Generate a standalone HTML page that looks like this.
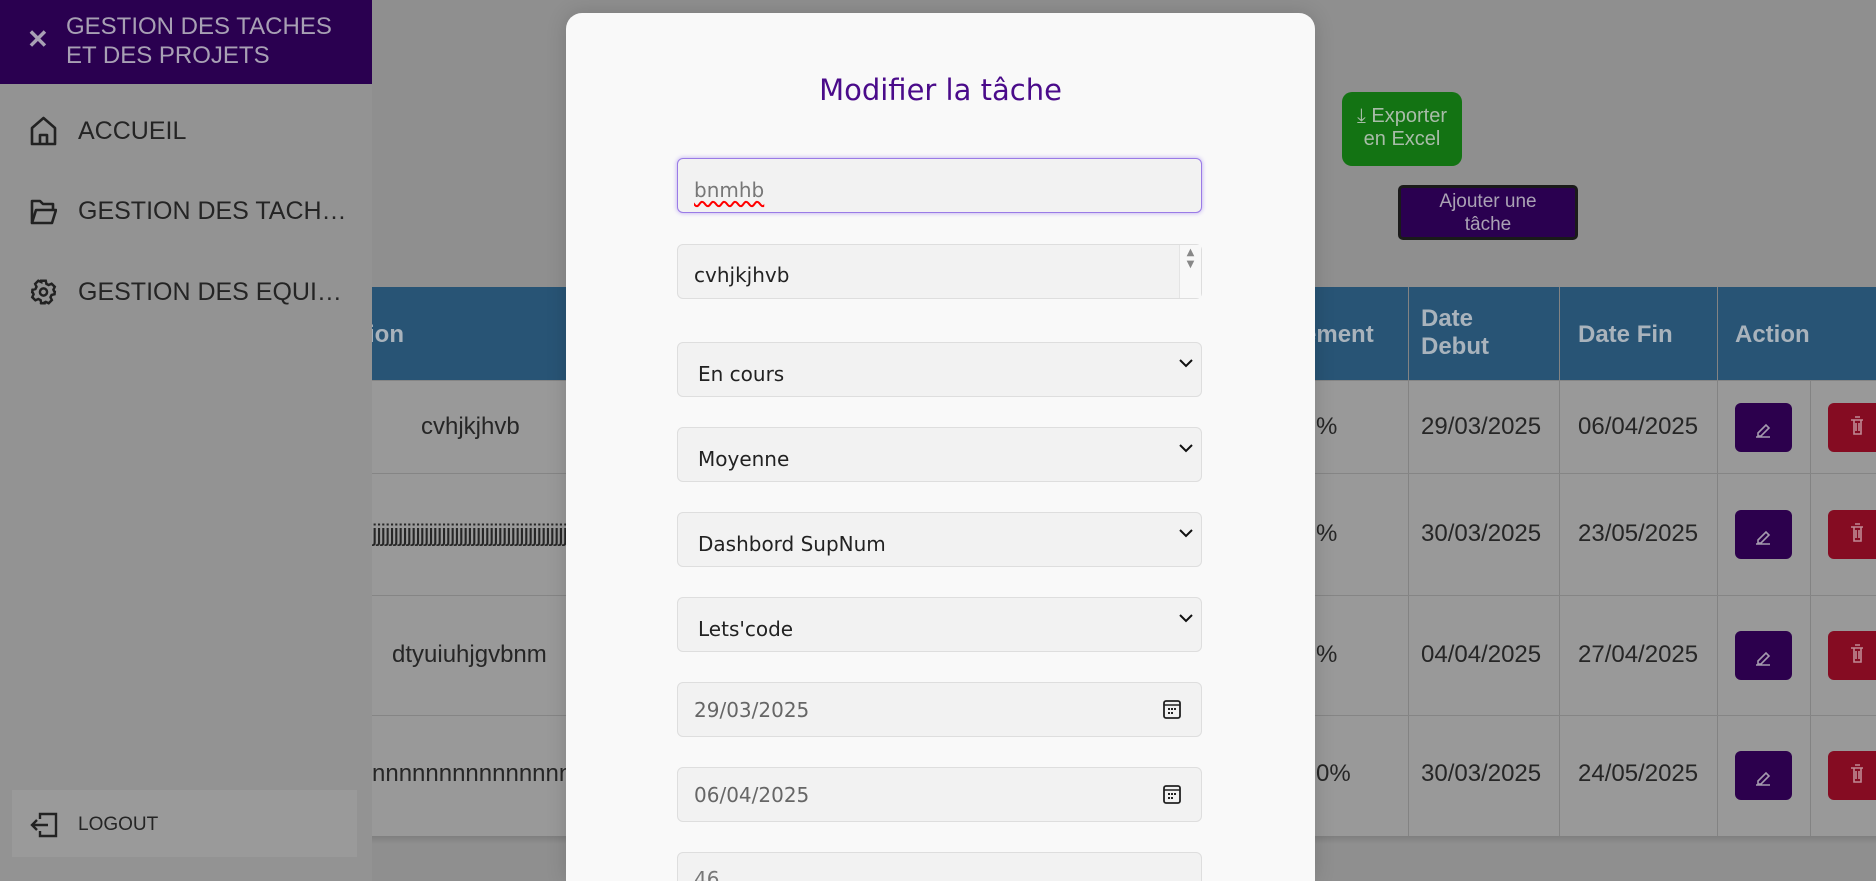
<!DOCTYPE html>
<html><head><meta charset="utf-8"><style>
*{box-sizing:border-box;margin:0;padding:0}
html{overflow:hidden;width:1876px;height:881px}
body{width:1876px;height:881px;overflow:hidden;background:#8f8f8f;font-family:"Liberation Sans",Arial,sans-serif;position:relative}
.abs{position:absolute}
.sb{left:0;top:0;width:372px;height:881px;background:#939393}
.sbh{left:0;top:0;width:372px;height:84px;background:#2a0050;color:#a8a0b4;font-size:24px;line-height:29px;padding:12px 0 0 66px}
.item{left:30px;color:#242424;font-size:25px;display:flex;align-items:center;gap:21px}
.th{background:#285475;color:#a9b3bc;font-weight:bold;font-size:24px}
.cell{color:#262626;font-size:24px}
.vl{width:1px;background:#838383}
.hl{height:1px;background:#858585}
.modal{left:566px;top:13px;width:749px;height:868px;background:#f9f9f9;border-radius:16px 16px 0 0;box-shadow:0 0 20px rgba(0,0,0,.15)}
.f{left:677px;width:525px;height:55px;background:#f2f2f2;border:1px solid #dedede;border-radius:6px;font-family:"DejaVu Sans","Liberation Sans",sans-serif;font-size:20px;color:#222;padding-left:20px;padding-top:8px;display:flex;align-items:center}
.chev{position:absolute;right:8px;top:16px}
.btn{border-radius:6px}
</style></head><body>
<!-- table -->
<div class="abs th" style="left:372px;top:287px;width:1504px;height:93px"></div>
<div class="abs" style="left:372px;top:380px;width:1504px;height:456px;background:#999"></div>
<div class="abs" style="left:372px;top:836px;width:1504px;height:8px;background:linear-gradient(#7f7f7f,#8f8f8f)"></div>
<div class="abs th" style="left:360px;top:321px">tion</div>
<div class="abs th" style="left:1303px;top:321px">ement</div>
<div class="abs th" style="left:1421px;top:305px;line-height:28px">Date<br>Debut</div>
<div class="abs th" style="left:1578px;top:321px">Date Fin</div>
<div class="abs th" style="left:1735px;top:321px">Action</div>
<div class="abs vl" style="left:1408px;top:287px;height:549px"></div>
<div class="abs vl" style="left:1559px;top:287px;height:549px"></div>
<div class="abs vl" style="left:1717px;top:287px;height:549px"></div>
<div class="abs vl" style="left:1810px;top:380px;height:456px"></div>
<div class="abs hl" style="left:372px;top:380px;width:1504px"></div>
<div class="abs hl" style="left:372px;top:473px;width:1504px"></div>
<div class="abs hl" style="left:372px;top:595px;width:1504px"></div>
<div class="abs hl" style="left:372px;top:715px;width:1504px"></div>
<div class="abs cell" style="left:421px;top:413px">cvhjkjhvb</div>
<div class="abs cell" style="left:372px;top:520px;width:195px;overflow:hidden;white-space:nowrap;letter-spacing:-1px">jjjjjjjjjjjjjjjjjjjjjjjjjjjjjjjjjjjjjjjjjjjjjjjjjjjjjjjjjjjjjjjjjjjjjjjjj</div>
<div class="abs cell" style="left:392px;top:641px">dtyuiuhjgvbnm</div>
<div class="abs cell" style="left:372px;top:760px;width:195px;overflow:hidden;white-space:nowrap">nnnnnnnnnnnnnnnnnnnnnn</div>
<div class="abs cell" style="left:1316px;top:413px">%</div>
<div class="abs cell" style="left:1316px;top:520px">%</div>
<div class="abs cell" style="left:1316px;top:641px">%</div>
<div class="abs cell" style="left:1316px;top:760px">0%</div>
<div class="abs cell" style="left:1421px;top:413px">29/03/2025</div>
<div class="abs cell" style="left:1578px;top:413px">06/04/2025</div>
<div class="abs cell" style="left:1421px;top:520px">30/03/2025</div>
<div class="abs cell" style="left:1578px;top:520px">23/05/2025</div>
<div class="abs cell" style="left:1421px;top:641px">04/04/2025</div>
<div class="abs cell" style="left:1578px;top:641px">27/04/2025</div>
<div class="abs cell" style="left:1421px;top:760px">30/03/2025</div>
<div class="abs cell" style="left:1578px;top:760px">24/05/2025</div>
<!-- action buttons -->
<div class="abs btn" style="left:1735px;top:403px;width:57px;height:49px;background:#2c004d"></div>
<div class="abs btn" style="left:1828px;top:403px;width:60px;height:49px;background:#850c22"></div>
<div class="abs btn" style="left:1735px;top:510px;width:57px;height:49px;background:#2c004d"></div>
<div class="abs btn" style="left:1828px;top:510px;width:60px;height:49px;background:#850c22"></div>
<div class="abs btn" style="left:1735px;top:631px;width:57px;height:49px;background:#2c004d"></div>
<div class="abs btn" style="left:1828px;top:631px;width:60px;height:49px;background:#850c22"></div>
<div class="abs btn" style="left:1735px;top:751px;width:57px;height:49px;background:#2c004d"></div>
<div class="abs btn" style="left:1828px;top:751px;width:60px;height:49px;background:#850c22"></div>
<svg class="abs" style="left:0;top:0" width="1876" height="881">
<g stroke="#a49aae" stroke-width="1.6" fill="none">
<path d="M1756 437h14M1758 433l8-8 3 3-8 8h-3z"/><path d="M1756 544h14M1758 540l8-8 3 3-8 8h-3z"/><path d="M1756 665h14M1758 661l8-8 3 3-8 8h-3z"/><path d="M1756 785h14M1758 781l8-8 3 3-8 8h-3z"/>
</g>
<g stroke="#c08a94" stroke-width="1.6" fill="none">
<path d="M1851 420h12M1854 420v14h7v-14M1855 417h5M1856 423v8M1859 423v8"/>
<path d="M1851 527h12M1854 527v14h7v-14M1855 524h5M1856 530v8M1859 530v8"/>
<path d="M1851 648h12M1854 648v14h7v-14M1855 645h5M1856 651v8M1859 651v8"/>
<path d="M1851 768h12M1854 768v14h7v-14M1855 765h5M1856 771v8M1859 771v8"/>
</g></svg>
<!-- top buttons -->
<div class="abs" style="left:1342px;top:92px;width:120px;height:74px;background:#137313;border-radius:10px;color:#a8bca8;font-size:20px;text-align:center;line-height:23px;padding-top:13px">⤓ Exporter<br>en Excel</div>
<div class="abs" style="left:1398px;top:185px;width:180px;height:55px;background:#2a0050;border:3px solid #1a1a1a;border-radius:5px;color:#aaa2b4;font-size:19px;text-align:center;line-height:23px;padding-top:2px">Ajouter une<br>tâche</div>
<!-- sidebar -->
<div class="abs sb"></div>
<div class="abs sbh">GESTION DES TACHES<br>ET DES PROJETS</div>
<div class="abs" style="left:27px;top:24px;color:#a8a0b4;font-size:26px;font-weight:bold">✕</div>
<div class="abs item" style="top:116px"><svg width="27" height="30" viewBox="0 0 27 30" fill="none" stroke="#222" stroke-width="2.6" stroke-linejoin="round"><path d="M2 12L13.5 2 25 12v16H2z"/><path d="M10 28v-9h7v9"/></svg>ACCUEIL</div>
<div class="abs item" style="top:197px"><svg width="27" height="26" viewBox="0 0 27 26" fill="none" stroke="#222" stroke-width="2.6" stroke-linejoin="round"><path d="M2 24V2h8l3 3h10v5"/><path d="M2 24l4-13h20l-4 13z"/></svg>GESTION DES TACH…</div>
<div class="abs item" style="top:277px"><svg width="27" height="30" viewBox="0 0 24 24" fill="none" stroke="#222" stroke-width="2.2"><circle cx="12" cy="12" r="3.2"/><path d="M10 2h4l.6 2.8 2 1 2.6-1.2 2.8 2.8-1.2 2.6 1 2L22 12v0l-.2 2-2.6.6-1 2 1.2 2.6-2.8 2.8-2.6-1.2-2 1L14 22h-4l-.6-2.8-2-1-2.6 1.2L2 16.6l1.2-2.6-1-2L2 12l.2-2 2.6-.6 1-2L4.6 4.8 7.4 2l2.6 1.2z"/></svg>GESTION DES EQUI…</div>
<div class="abs" style="left:12px;top:790px;width:345px;height:67px;background:#9a9a9a"></div>
<div class="abs item" style="top:812px;font-size:19px;gap:20px"><svg width="28" height="26" viewBox="0 0 28 26" fill="none" stroke="#222" stroke-width="2.4"><path d="M10 7V2h16v22H10v-5"/><path d="M2 13h16M7 8l-5 5 5 5"/></svg>LOGOUT</div>
<!-- modal -->
<div class="abs modal"></div>
<div class="abs" style="left:566px;width:749px;top:73px;text-align:center;color:#4a0b8a;font-family:'DejaVu Sans',sans-serif;font-size:29px">Modifier la tâche</div>
<div class="abs f" style="top:158px;border:1px solid #9a7be6;box-shadow:0 0 5px #b9a4f0;color:#777;padding-left:16px"><span style="text-decoration:underline wavy red;text-underline-offset:4px">bnmhb</span></div>
<div class="abs f" style="top:244px;padding-left:16px;padding-top:6px"><span>cvhjkjhvb</span><div style="position:absolute;right:0;top:0;width:22px;height:53px;border-left:1px solid #e4e4e4;background:#f8f8f8;color:#888;font-size:10px;text-align:center;line-height:12px;padding-top:2px">▲<br>▼</div></div>
<div class="abs f" style="top:342px">En cours<svg class="chev" width="14" height="9"><path d="M1 1l6 6 6-6" stroke="#111" stroke-width="2" fill="none"/></svg></div>
<div class="abs f" style="top:427px">Moyenne<svg class="chev" width="14" height="9"><path d="M1 1l6 6 6-6" stroke="#111" stroke-width="2" fill="none"/></svg></div>
<div class="abs f" style="top:512px">Dashbord SupNum<svg class="chev" width="14" height="9"><path d="M1 1l6 6 6-6" stroke="#111" stroke-width="2" fill="none"/></svg></div>
<div class="abs f" style="top:597px">Lets'code<svg class="chev" width="14" height="9"><path d="M1 1l6 6 6-6" stroke="#111" stroke-width="2" fill="none"/></svg></div>
<div class="abs f" style="top:682px;color:#666;padding-left:16px;padding-top:0">29/03/2025<svg style="position:absolute;right:20px;top:17px" width="18" height="19"><rect x="1" y="1" width="16" height="17" rx="2" stroke="#222" stroke-width="1.8" fill="none"/><path d="M1 5h16" stroke="#222" stroke-width="1.5"/><g fill="#222"><rect x="5" y="8" width="2" height="2"/><rect x="8" y="8" width="2" height="2"/><rect x="11" y="8" width="2" height="2"/><rect x="5" y="12" width="2" height="2"/><rect x="8" y="12" width="2" height="2"/></g></svg></div>
<div class="abs f" style="top:767px;color:#666;padding-left:16px;padding-top:0">06/04/2025<svg style="position:absolute;right:20px;top:17px" width="18" height="19"><rect x="1" y="1" width="16" height="17" rx="2" stroke="#222" stroke-width="1.8" fill="none"/><path d="M1 5h16" stroke="#222" stroke-width="1.5"/><g fill="#222"><rect x="5" y="8" width="2" height="2"/><rect x="8" y="8" width="2" height="2"/><rect x="11" y="8" width="2" height="2"/><rect x="5" y="12" width="2" height="2"/><rect x="8" y="12" width="2" height="2"/></g></svg></div>
<div class="abs f" style="top:852px;height:40px;color:#777;padding-left:16px;align-items:flex-start;padding-top:14px">46</div>
</body></html>
